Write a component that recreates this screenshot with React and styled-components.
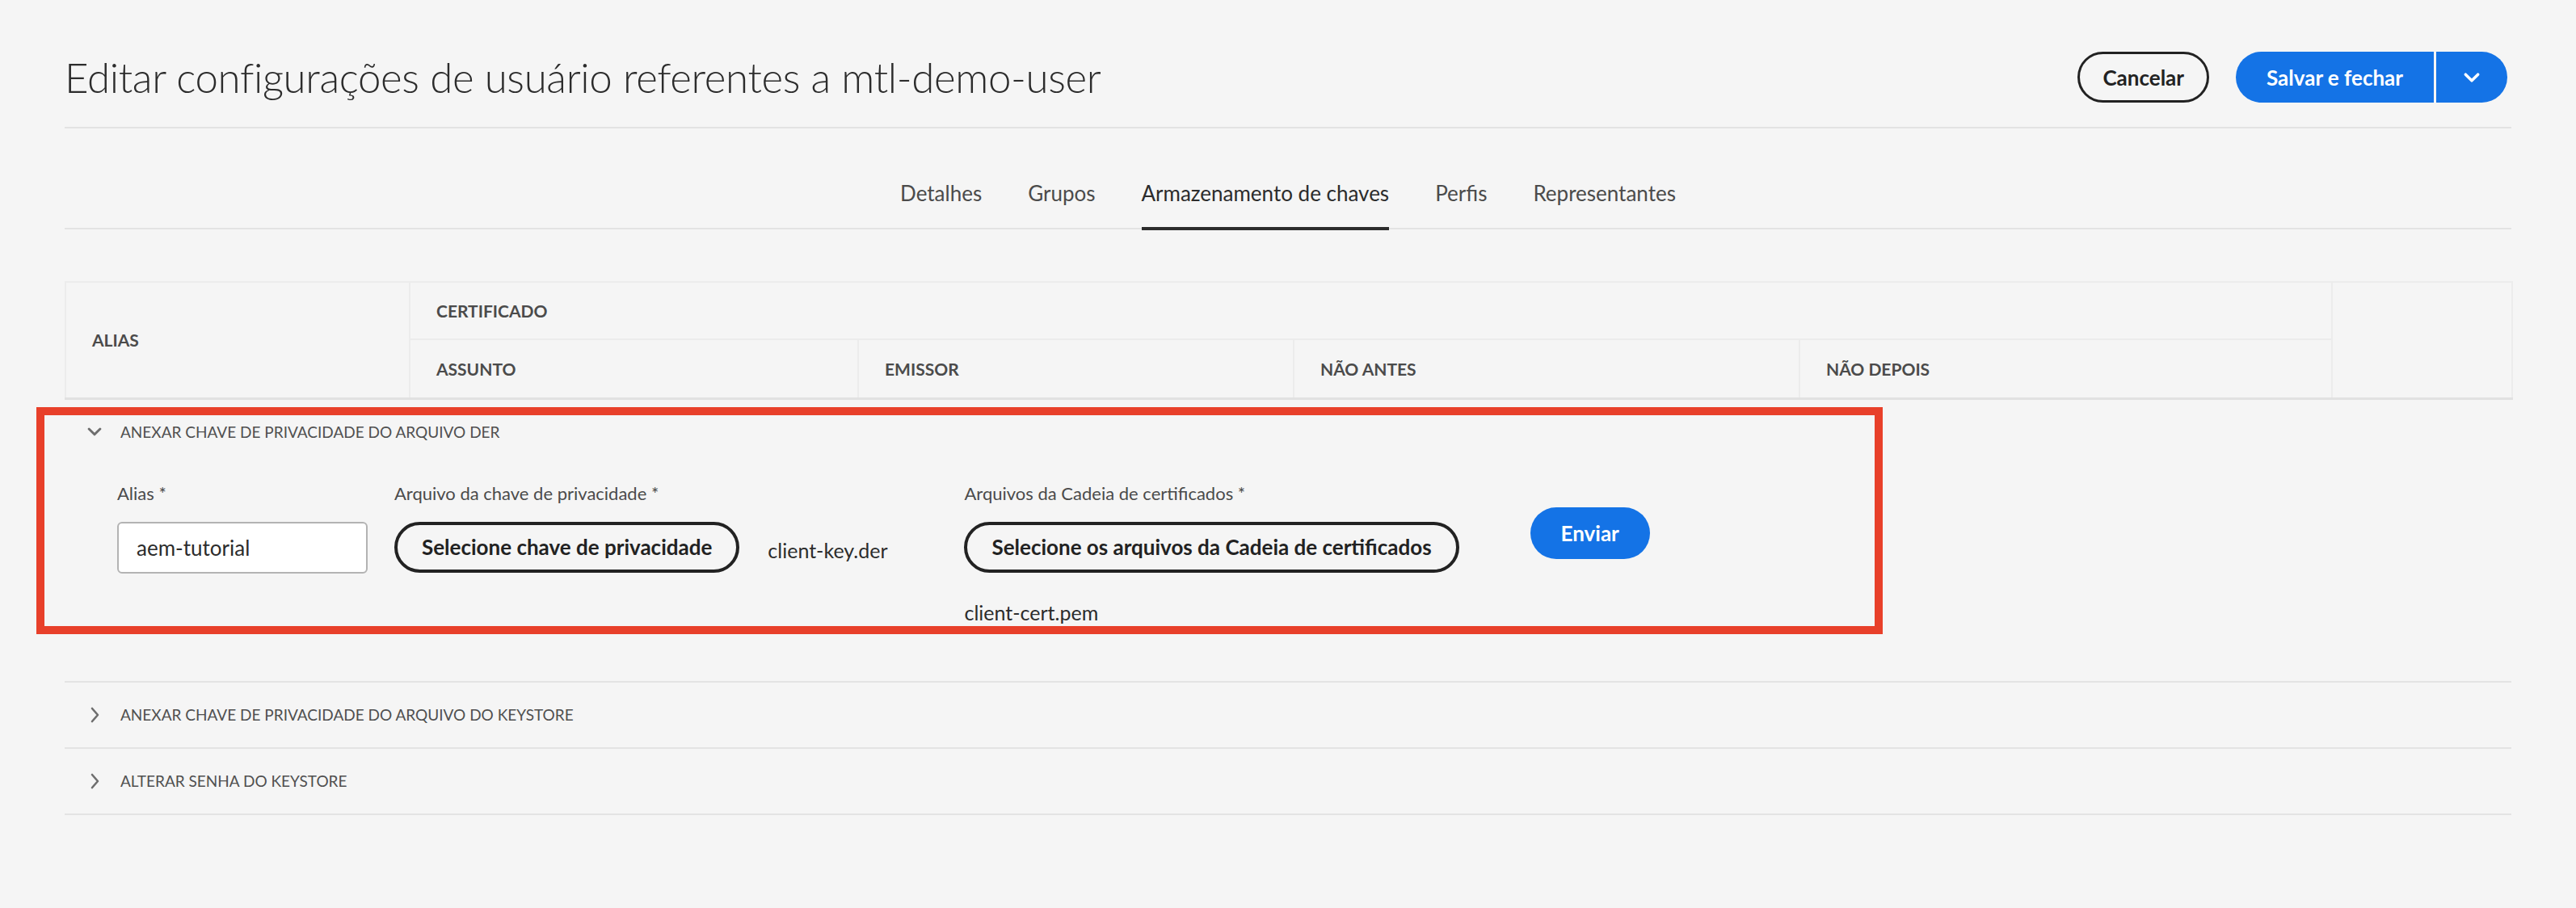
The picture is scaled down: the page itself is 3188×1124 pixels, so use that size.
import styled, { createGlobalStyle } from 'styled-components';

const GlobalStyle = createGlobalStyle`
	html, body {
		margin: 0;
		padding: 0;
		background: #f5f5f5;
	}
	body {
		font-family: Lato, "Open Sans", sans-serif;
		color: #2c2c2c;
	}
	* {
		box-sizing: border-box;
	}
`;

const Page = styled.div`
	min-height: 1124px;
	padding: 0 80px;
	background: #f5f5f5;
`;

const Header = styled.header`
	display: flex;
	align-items: center;
	justify-content: space-between;
	padding: 64px 5px 30px 0;
	border-bottom: 2px solid #e3e3e3;
`;

const Title = styled.h1`
	margin: 0;
	font-size: 51px;
	font-weight: 300;
	letter-spacing: -0.35px;
	line-height: 63px;
	color: #2c2c2c;
`;

const Actions = styled.div`
	display: flex;
	align-items: center;
	gap: 33px;
`;

const OutlineButton = styled.button`
	height: 63px;
	padding: 0 28px;
	border: 3px solid #222;
	border-radius: 32px;
	background: transparent;
	font-family: inherit;
	font-size: 26px;
	font-weight: 700;
	color: #222;
`;

const SplitButton = styled.div`
	display: flex;
	gap: 3px;
`;

const PrimaryButton = styled.button`
	height: ${({ $h }) => $h || 63}px;
	padding: 0 ${({ $pad }) => $pad || 28}px;
	border: none;
	border-radius: ${({ $radius }) => $radius || '32px'};
	background: #1473e6;
	font-family: inherit;
	font-size: 26px;
	font-weight: 700;
	color: #fff;
	display: flex;
	align-items: center;
	justify-content: center;
`;

const TabBar = styled.nav`
	display: flex;
	justify-content: center;
	gap: 57px;
	padding-top: 60px;
	border-bottom: 2px solid #e3e3e3;
`;

const Tab = styled.div`
	font-size: 26px;
	line-height: 40px;
	padding-bottom: 22px;
	margin-bottom: -3px;
	color: ${({ $active }) => ($active ? '#2c2c2c' : '#4b4b4b')};
	border-bottom: 4px solid ${({ $active }) => ($active ? '#2c2c2c' : 'transparent')};
`;

const Table = styled.table`
	width: 100%;
	margin-top: 64px;
	border-collapse: collapse;
	table-layout: fixed;
	border-bottom: 3px solid #e1e1e1;
`;

const Th = styled.th`
	height: ${({ $h }) => $h || 71}px;
	padding: 0 32px;
	text-align: left;
	vertical-align: middle;
	font-size: 21px;
	font-weight: 700;
	text-transform: uppercase;
	color: #4b4b4b;
	border: 2px solid #ececec;
`;

const Section = styled.section`
	position: relative;
	border-bottom: 2px solid #e3e3e3;
`;

const SectionHeader = styled.div`
	display: flex;
	align-items: center;
	gap: 22px;
	height: 80px;
	padding-left: 27px;
	font-size: 19px;
	text-transform: uppercase;
	color: #505050;
`;

const ChevronBox = styled.span`
	display: flex;
	align-items: center;
	justify-content: center;
	width: 20px;
`;

const Highlight = styled.div`
	position: absolute;
	top: 9px;
	left: -35px;
	width: 2285px;
	height: 281px;
	border: 10px solid #e8402a;
	pointer-events: none;
`;

const FormRow = styled.div`
	display: flex;
	align-items: flex-start;
	padding: 21px 0 68px 65px;
`;

const Field = styled.div`
	display: flex;
	flex-direction: column;
	gap: 20px;
	margin-right: ${({ $gap }) => $gap || 0}px;
`;

const Label = styled.label`
	font-size: 22px;
	line-height: 30px;
	color: #4b4b4b;
`;

const TextInput = styled.input`
	width: 310px;
	height: 64px;
	padding: 0 22px;
	border: 2px solid #b3b3b3;
	border-radius: 6px;
	background: #fff;
	font-family: inherit;
	font-size: 26px;
	color: #2c2c2c;
`;

const FileLine = styled.div`
	display: flex;
	align-items: ${({ $stacked }) => ($stacked ? 'flex-start' : 'center')};
	flex-direction: ${({ $stacked }) => ($stacked ? 'column' : 'row')};
	gap: ${({ $stacked }) => ($stacked ? 32 : 35)}px;
`;

const SelectButton = styled.button`
	height: 63px;
	padding: 0 30px;
	border: 4px solid #222;
	border-radius: 32px;
	background: transparent;
	font-family: inherit;
	font-size: 26px;
	font-weight: 700;
	color: #222;
	white-space: nowrap;
`;

const FileName = styled.span`
	font-size: 25px;
	line-height: 34px;
	color: #2c2c2c;
	padding-top: ${({ $drop }) => $drop || 0}px;
`;

const SubmitWrap = styled.div`
	padding-top: 32px;
`;

const ChevronDown = ({ color = '#6e6e6e', size = 18, stroke = 3 }) => (
	<svg width={size} height={size * 0.6} viewBox="0 0 18 11" fill="none">
		<path d="M2 2l7 7 7-7" stroke={color} strokeWidth={stroke} strokeLinecap="round" strokeLinejoin="round" />
	</svg>
);

const ChevronRight = () => (
	<svg width="11" height="20" viewBox="0 0 11 20" fill="none">
		<path d="M2 2l7 8-7 8" stroke="#6e6e6e" strokeWidth="2.6" strokeLinecap="round" strokeLinejoin="round" />
	</svg>
);

const tabs = ['Detalhes', 'Grupos', 'Armazenamento de chaves', 'Perfis', 'Representantes'];

export default function App() {
	return (
		<Page>
			<GlobalStyle />
			<Header>
				<Title>Editar configurações de usuário referentes a mtl-demo-user</Title>
				<Actions>
					<OutlineButton>Cancelar</OutlineButton>
					<SplitButton>
						<PrimaryButton $radius="32px 0 0 32px" $pad={38}>Salvar e fechar</PrimaryButton>
						<PrimaryButton $radius="0 32px 32px 0" $pad={34}>
							<ChevronDown color="#fff" size={20} stroke={3.2} />
						</PrimaryButton>
					</SplitButton>
				</Actions>
			</Header>

			<TabBar>
				{tabs.map((t) => (
					<Tab key={t} $active={t === 'Armazenamento de chaves'}>{t}</Tab>
				))}
			</TabBar>

			<Table>
				<colgroup>
					<col style={{ width: 426 }} />
					<col style={{ width: 555 }} />
					<col style={{ width: 539 }} />
					<col style={{ width: 626 }} />
					<col style={{ width: 659 }} />
					<col style={{ width: 223 }} />
				</colgroup>
				<thead>
					<tr>
						<Th rowSpan={2}>Alias</Th>
						<Th colSpan={4}>Certificado</Th>
						<Th rowSpan={2} />
					</tr>
					<tr>
						<Th $h={73}>Assunto</Th>
						<Th $h={73}>Emissor</Th>
						<Th $h={73}>Não antes</Th>
						<Th $h={73}>Não depois</Th>
					</tr>
				</thead>
			</Table>

			<Section>
				<Highlight />
				<SectionHeader>
					<ChevronBox><ChevronDown /></ChevronBox>
					Anexar chave de privacidade do arquivo DER
				</SectionHeader>
				<FormRow>
					<Field $gap={33}>
						<Label>Alias *</Label>
						<TextInput value="aem-tutorial" readOnly />
					</Field>
					<Field $gap={95}>
						<Label>Arquivo da chave de privacidade *</Label>
						<FileLine>
							<SelectButton>Selecione chave de privacidade</SelectButton>
							<FileName $drop={8}>client-key.der</FileName>
						</FileLine>
					</Field>
					<Field $gap={88}>
						<Label>Arquivos da Cadeia de certificados *</Label>
						<FileLine $stacked>
							<SelectButton>Selecione os arquivos da Cadeia de certificados</SelectButton>
							<FileName>client-cert.pem</FileName>
						</FileLine>
					</Field>
					<SubmitWrap>
						<PrimaryButton $h={64} $pad={38}>Enviar</PrimaryButton>
					</SubmitWrap>
				</FormRow>
			</Section>

			<Section>
				<SectionHeader>
					<ChevronBox><ChevronRight /></ChevronBox>
					Anexar chave de privacidade do arquivo do keystore
				</SectionHeader>
			</Section>
			<Section>
				<SectionHeader>
					<ChevronBox><ChevronRight /></ChevronBox>
					Alterar senha do keystore
				</SectionHeader>
			</Section>
		</Page>
	);
}
